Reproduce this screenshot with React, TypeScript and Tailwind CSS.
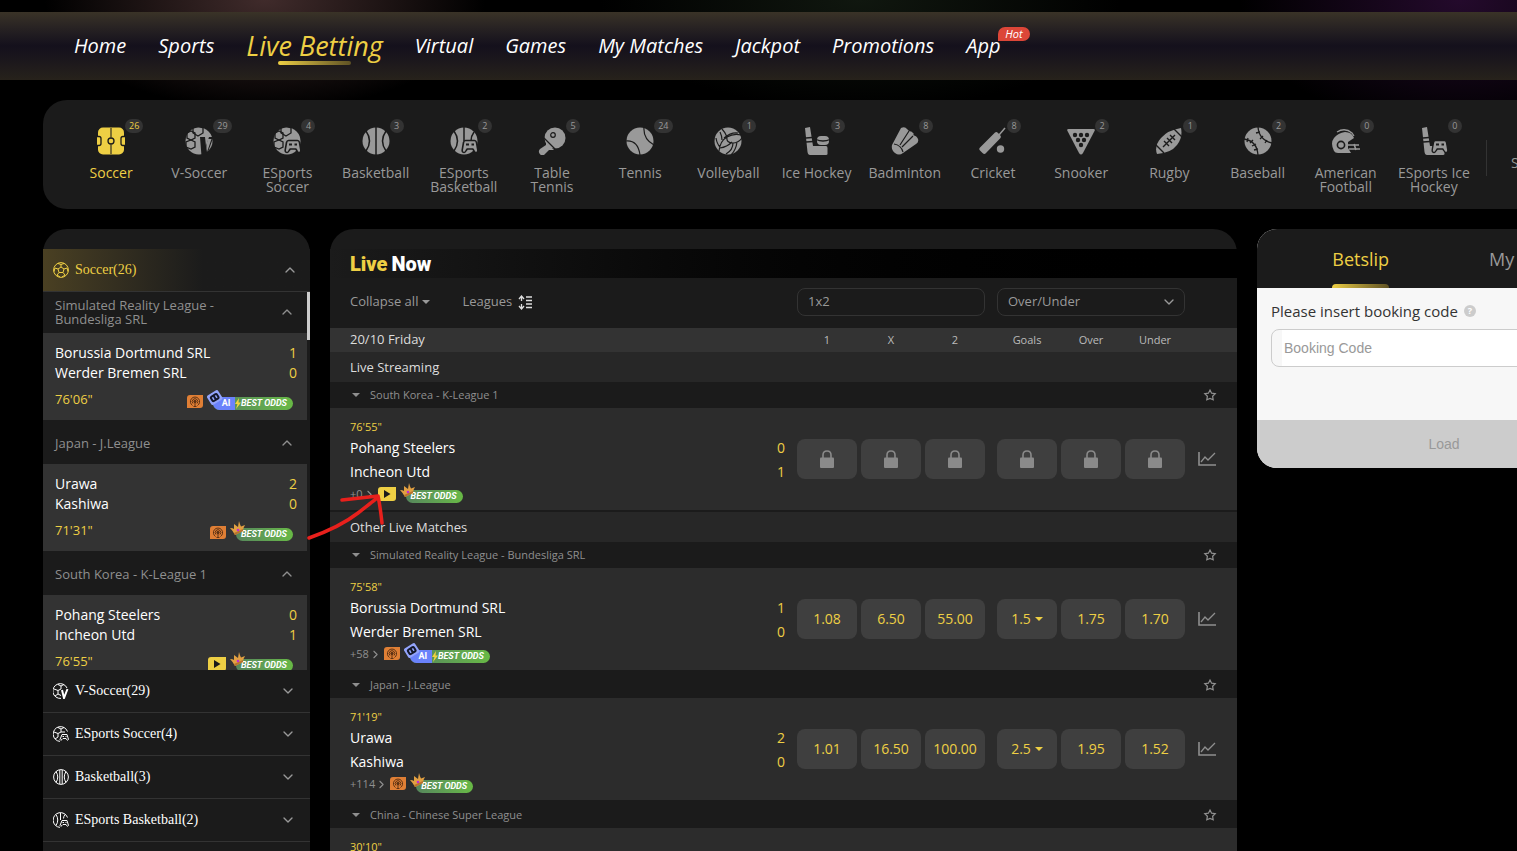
import type { ReactNode } from "react";
import { ChevronDown, ChevronRight, ChevronUp } from "lucide-react";

const BG = "#1b1b1b";

type IconName =
  | "soccer"
  | "vsoccer"
  | "esoccer"
  | "basketball"
  | "ebasketball"
  | "tabletennis"
  | "tennis"
  | "volleyball"
  | "hockey"
  | "badminton"
  | "cricket"
  | "snooker"
  | "rugby"
  | "baseball"
  | "football"
  | "ehockey";

const hexes = (
  <g>
    <path d="M13-1l5 2v5l-5 3-5-3V1z" />
    <path d="M6 4l4 2v5l-4 2-4-2V6z" />
    <path d="M6 13l4 2v5l-4 2-5-2v-5z" />
  </g>
);

const pad = (
  <path d="M15.5 13.500h9q1.500 0 2 2l1.300 7.500q.2 2.500-2 2.500-1 0-2-2l-1-1.500h-5.600l-1 1.500q-1 2-2 2-2.200 0-2-2.500l1.300-7.500q.5-2 2-2z" />
);

const padEyes = (
  <g stroke="none" fill={BG}>
    <rect x="16" y="16.500" width="3" height="2" />
    <rect x="21.500" y="16.500" width="2.500" height="2" />
  </g>
);

const drawings: Record<IconName, ReactNode> = {
  soccer: (
    <>
      <rect x="1" y="0.500" width="26" height="27" rx="5" fill="currentColor" />
      <path d="M14 1v9.500M14 17.500V27" stroke={BG} strokeWidth="1.500" opacity=".7" />
      <circle cx="14" cy="14" r="3" fill="none" stroke={BG} strokeWidth="1.300" />
      <path d="M0 9.500h2q2 0 2 2v5q0 2-2 2H0M28 9.500h-2q-2 0-2 2v5q0 2 2 2h2" fill="currentColor" stroke={BG} strokeWidth="1.300" />
    </>
  ),
  vsoccer: (
    <>
      <circle cx="14" cy="14" r="13.500" fill="currentColor" />
      <g fill="none" stroke={BG} strokeWidth="1.300">{hexes}</g>
      <path d="M15 10h5l1 9 3-9h4.500l-7 19h-5z" fill={BG} />
      <path d="M23 12h3.500l-4.500 13q-1.500-6 1-13z" fill="currentColor" />
    </>
  ),
  esoccer: (
    <>
      <circle cx="14" cy="14" r="13.500" fill="currentColor" />
      <g fill="none" stroke={BG} strokeWidth="1.300">{hexes}</g>
      <g fill="currentColor" stroke={BG} strokeWidth="1.600">{pad}</g>
      {padEyes}
    </>
  ),
  basketball: (
    <>
      <circle cx="14" cy="14" r="13.500" fill="currentColor" />
      <path d="M14 0v28M4 4q7 10 0 20M24 4q-7 10 0 20" fill="none" stroke={BG} strokeWidth="1.500" />
    </>
  ),
  ebasketball: (
    <>
      <circle cx="14" cy="14" r="13.500" fill="currentColor" />
      <path d="M14 0v14M4 4q7 10 0 20M24 5q-3 4-3 9" fill="none" stroke={BG} strokeWidth="1.500" />
      <g fill="currentColor" stroke={BG} strokeWidth="1.600">{pad}</g>
      {padEyes}
    </>
  ),
  tabletennis: (
    <>
      <circle cx="17" cy="11" r="10.500" fill="currentColor" />
      <path d="M8 15l8 8-5 0-5 5q-3 1-4.500-1.500T2 22l6-4z" fill="currentColor" />
      <path d="M5 10l15 15" stroke={BG} strokeWidth="1.300" />
      <circle cx="15" cy="8" r="2.300" fill="none" stroke={BG} strokeWidth="1.200" />
    </>
  ),
  tennis: (
    <>
      <circle cx="14" cy="14" r="13.500" fill="currentColor" />
      <path d="M0 14q12-1 14 14M18 0q-1 12 10 18" fill="none" stroke={BG} strokeWidth="1.200" />
    </>
  ),
  volleyball: (
    <>
      <circle cx="14" cy="14" r="13.500" fill="currentColor" />
      <path
        d="M8 2q3 3 5 8 7-4 14-2M10 11q7-6 14-5M13 10q-7 4-8 14M6 5q2 4 2 8M2 11q1 6 4 9M13 10q-1 6 6 6 5 0 9-5M19 16q0 7-7 11M23 15q-1 8-6 13M6 21q7-1 12-6"
        fill="none"
        stroke={BG}
        strokeWidth="1.200"
      />
    </>
  ),
  hockey: (
    <>
      <path d="M2 1l5-1 3 19h13q1.500 0 1.500 2v6q0 1-1.500 1H7q-2 0-2.500-3z" fill="currentColor" />
      <path d="M3 11l6-.5M3 15l7-.5" stroke={BG} strokeWidth="1.300" />
      <rect x="14" y="9" width="12" height="9" rx="4" fill="currentColor" />
      <path d="M13 12.500q7 3 14 0" stroke={BG} strokeWidth="1.300" fill="none" />
    </>
  ),
  badminton: (
    <>
      <path d="M10 1q4-2 6 1l2 2q3 0 5 3l-1 1q4 1 5 4t-2 5l-13 9q-4 3-8 0t-3-8z" fill="currentColor" />
      <path d="M3 17q7 1 9 8M9 18l9-14M11 20L22 9" fill="none" stroke={BG} strokeWidth="1.200" />
    </>
  ),
  cricket: (
    <>
      <path d="M16 5.500q1.500-1 3 .5l2 2q1.500 1.500.5 3L7 26q-1.500 2-3.500 0L1 23.500q-1.500-1.500 0-3z" fill="currentColor" />
      <path d="M20 8l6-7" stroke="currentColor" strokeWidth="1.500" />
      <circle cx="21.500" cy="22" r="3.700" fill="currentColor" />
    </>
  ),
  snooker: (
    <>
      <path d="M1.500 2h25q2 0 1 2L16 26q-2 3-4 0L.5 4q-1-2 1-2z" fill="currentColor" />
      <g fill={BG}>
        <circle cx="8" cy="8" r="2.200" />
        <circle cx="14" cy="8" r="2.200" />
        <circle cx="20" cy="8" r="2.200" />
        <circle cx="11" cy="13" r="2.200" />
        <circle cx="17" cy="13" r="2.200" />
        <circle cx="14" cy="18" r="2.200" />
      </g>
    </>
  ),
  rugby: (
    <>
      <path d="M26 1q2 9-4 17T2 27Q-1 19 6 11T26 1z" fill="currentColor" />
      <path d="M18 1l9 9M1 18l8 8M8 20L20 8M9 14l5 5M12 11l5 5M15 8l5 5" stroke={BG} strokeWidth="1.400" />
    </>
  ),
  baseball: (
    <>
      <circle cx="14" cy="14" r="13.500" fill="currentColor" />
      <path
        d="M0 12q13 2 14 16M14 0q1 13 14 16M4 11l-1 4M9 13l-3 3M12 17l-4 2M14 22l-4 1M16 5l-4 1M19 9l-3 3M23 13l-2 3"
        fill="none"
        stroke={BG}
        strokeWidth="1.300"
      />
    </>
  ),
  football: (
    <>
      <path d="M2 24q-4-8 0-13t11-6q7 0 9 6l-6 4v6l3 5H6q-3 0-4-2z" fill="currentColor" />
      <path d="M5 5q8-5 15 1l2 3" stroke="currentColor" strokeWidth="1.300" fill="none" />
      <circle cx="9" cy="18" r="3.600" stroke={BG} strokeWidth="1.600" fill="none" />
      <path d="M16 18h11M17 22h11M22 17l2 6" stroke="currentColor" strokeWidth="1.600" />
    </>
  ),
  ehockey: (
    <>
      <path d="M2 1l5-1 3 19h13q1.500 0 1.500 2v6q0 1-1.500 1H7q-2 0-2.500-3z" fill="currentColor" />
      <path d="M3 11l6-.5M3 15l7-.5" stroke={BG} strokeWidth="1.300" />
      <g fill="currentColor" stroke={BG} strokeWidth="1.400">{pad}</g>
      {padEyes}
    </>
  ),
};

const sports: { icon: IconName; label: string; count: number }[] = [
  { icon: "soccer", label: "Soccer", count: 26 },
  { icon: "vsoccer", label: "V-Soccer", count: 29 },
  { icon: "esoccer", label: "ESports Soccer", count: 4 },
  { icon: "basketball", label: "Basketball", count: 3 },
  { icon: "ebasketball", label: "ESports Basketball", count: 2 },
  { icon: "tabletennis", label: "Table Tennis", count: 5 },
  { icon: "tennis", label: "Tennis", count: 24 },
  { icon: "volleyball", label: "Volleyball", count: 1 },
  { icon: "hockey", label: "Ice Hockey", count: 3 },
  { icon: "badminton", label: "Badminton", count: 8 },
  { icon: "cricket", label: "Cricket", count: 8 },
  { icon: "snooker", label: "Snooker", count: 2 },
  { icon: "rugby", label: "Rugby", count: 1 },
  { icon: "baseball", label: "Baseball", count: 2 },
  { icon: "football", label: "American Football", count: 0 },
  { icon: "ehockey", label: "ESports Ice Hockey", count: 0 },
];

type Match = {
  league: string;
  time: string;
  home: string;
  away: string;
  score: [number, number];
  stream?: boolean;
  ai?: boolean;
  more?: number;
  odds?: string[];
};

const sideMatches: Match[] = [
  { league: "Simulated Reality League - Bundesliga SRL", time: "76'06\"", home: "Borussia Dortmund SRL", away: "Werder Bremen SRL", score: [1, 0], ai: true },
  { league: "Japan - J.League", time: "71'31\"", home: "Urawa", away: "Kashiwa", score: [2, 0] },
  { league: "South Korea - K-League 1", time: "76'55\"", home: "Pohang Steelers", away: "Incheon Utd", score: [0, 1], stream: true },
];

const streaming: Match[] = [
  { league: "South Korea - K-League 1", time: "76'55\"", home: "Pohang Steelers", away: "Incheon Utd", score: [0, 1], stream: true, more: 0 },
];

const others: Match[] = [
  {
    league: "Simulated Reality League - Bundesliga SRL",
    time: "75'58\"",
    home: "Borussia Dortmund SRL",
    away: "Werder Bremen SRL",
    score: [1, 0],
    ai: true,
    more: 58,
    odds: ["1.08", "6.50", "55.00", "1.5", "1.75", "1.70"],
  },
  {
    league: "Japan - J.League",
    time: "71'19\"",
    home: "Urawa",
    away: "Kashiwa",
    score: [2, 0],
    more: 114,
    odds: ["1.01", "16.50", "100.00", "2.5", "1.95", "1.52"],
  },
  { league: "China - Chinese Super League", time: "30'10\"", home: "", away: "", score: [0, 0] },
];

function Caret({ className = "" }: { className?: string }) {
  return (
    <svg width="8" height="4" viewBox="0 0 8 4" className={className}>
      <path d="M0 0h8L4 4z" fill="currentColor" />
    </svg>
  );
}

function SideIcon({ name }: { name: string }) {
  return (
    <svg width="16" height="16" viewBox="0 0 16 16" fill="none" stroke="currentColor" strokeWidth="1">
      {name === "soccer" && (
        <>
          <circle cx="8" cy="8" r="7.400" />
          <path d="M8 5l3 2-1 3.500H6L5 7zM8 5V2.500M5 7L2 6M11 7l3-1M6 10.500L4 13M10 10.500L12 13M5 1.500l3 1 3-1M1 9.500L2 6M15 9.500L14 6M4 13l3 2M12 13l-3 2" />
        </>
      )}
      {name === "vsoccer" && (
        <>
          <path d="M14 5A7.400 7.400 0 1 0 8 15.400M5 1.500l3 1.500 3-1.500M8 3v3L5 7.500 1 6M5 7.500V11l-3 2M5 11l3 1.500" />
          <path d="M9 7l2 8 3.500-9" strokeWidth="2" />
        </>
      )}
      {name === "basketball" && (
        <>
          <circle cx="8" cy="8" r="7.400" />
          <path d="M6.800 1v14M9.200 1v14M3 2.500q3.500 5.500 0 11M13 2.500q-3.500 5.500 0 11" />
        </>
      )}
      {(name === "esoccer" || name === "ebasketball") && (
        <>
          <path d="M14.500 5.500A7.400 7.400 0 1 0 7 15.400" />
          {name === "esoccer" ? (
            <path d="M5 1.500l3 1.500 3-1.500M8 3v3L5 7.500 1 6M5 7.500V11l-3 2M8 6l4 0" />
          ) : (
            <path d="M7.500 1v7M3 2.500q3.500 5.500 0 11M12 2.500q-1.500 2-1.500 4" />
          )}
          <path d="M9 8.500h5l1.500 5q-.5 1.500-2 0l-.5-1h-3l-1 1q-1.500 1.500-2 0z" />
          <path d="M9.500 10.500h1.500M12.500 10.500h1" />
        </>
      )}
    </svg>
  );
}

function LiveTag({ stream }: { stream?: boolean }) {
  if (stream) {
    return (
      <svg width="18" height="14" viewBox="0 0 18 14">
        <path d="M3 0h15v11q0 3-3 3H0V3q0-3 3-3z" fill="#eecf44" />
        <path d="M6 3l6.500 4L6 11z" fill="#1b1b1b" />
      </svg>
    );
  }
  return (
    <svg width="16" height="14" viewBox="0 0 16 14">
      <path d="M3 0h13v10q0 3-3 3H0V3q0-3 3-3z" fill="#e07f35" />
      <g fill="none" stroke="#5e3314" strokeWidth="1">
        <circle cx="8" cy="6.500" r="1.200" fill="#5e3314" />
        <path d="M5.500 10.500a4.600 4.600 0 1 1 5 0M6 8.500a2.800 2.800 0 1 1 4 0M8 7v4.500M6.500 11.500h3" />
      </g>
    </svg>
  );
}

function BestOdds({ ai }: { ai?: boolean }) {
  return (
    <span className="relative mt-1 inline-flex h-[13px] items-center rounded-full bg-gradient-to-r from-[#56865b] to-[#68b945] pr-1.5 font-['Roboto',sans-serif] text-[9px] leading-[13px] font-bold text-white italic">
      {ai ? (
        <>
          <span className="flex h-[13px] w-[22px] items-center justify-center rounded-l-full bg-[#6a82fb] pl-1 not-italic">AI</span>
          <svg width="6" height="11" viewBox="0 0 6 11">
            <path d="M4 0L0 6h2.500L1 11l5-6.500H3.500z" fill="#f4d33e" />
          </svg>
          <svg width="16" height="15" viewBox="0 0 16 15" className="absolute -top-[7px] -left-1.5">
            <g transform="rotate(-32 8 8)">
              <rect x="1.500" y="2" width="13" height="11" rx="2" fill="#93a4fb" />
              <rect x="3.500" y="4" width="9" height="7" rx="2" fill="#14182b" />
              <rect x="5.500" y="6" width="1.500" height="3" fill="#93a4fb" />
              <rect x="9" y="6" width="1.500" height="3" fill="#93a4fb" />
            </g>
          </svg>
        </>
      ) : (
        <svg width="15" height="14" viewBox="0 0 15 14" className="absolute -top-[7px] -left-1.5">
          <path d="M0 7q3 0 4 1L4 3l4 3L9 0q1 4 2 5.500L15 4q-2 3-2 6l-8 4q-2-4-5-7z" fill="#e2a042" />
          <path d="M4 12l9-4v2l-8 4z" fill="#b8722d" />
          <circle cx="8" cy="9" r="1.300" fill="#c02bd1" />
        </svg>
      )}
      <span className={ai ? "" : "pl-[5px]"}>BEST ODDS</span>
    </span>
  );
}

function Lock() {
  return (
    <svg width="16" height="20" viewBox="0 0 16 20">
      <path d="M4 9V6q0-4 4-4t4 4v3" fill="none" stroke="#8a8a8a" strokeWidth="1.600" />
      <rect x="1" y="8.500" width="14" height="10.500" rx="1" fill="#8a8a8a" />
    </svg>
  );
}

function MatchRow({ match }: { match: Match }) {
  const cell = "flex h-10 w-[60px] items-center justify-center rounded-lg bg-[#3f3f3f] text-sm text-[#eecf44]";
  const values = match.odds ?? ["", "", "", "", "", ""];
  return (
    <>
      <div className="flex h-[26px] items-center justify-between pr-5 pl-[22px] text-[11px] text-[#8f8f8f]">
        <button className="flex items-center gap-2.5">
          <Caret />
          {match.league}
        </button>
        <button aria-label="Add league to favourites">
          <svg width="14" height="14" viewBox="0 0 14 14" fill="none" stroke="currentColor" strokeWidth="1.200">
            <path d="M7 2l1.600 3.200 3.600.5-2.600 2.500.6 3.600L7 10.500l-3.200 1.300.6-3.600L1.800 5.700l3.600-.5z" />
          </svg>
        </button>
      </div>
      <div className="flex h-[104px] items-center border-b-2 border-[#1b1b1b] bg-[#2c2c2c] pl-5">
        <div className="min-w-0 flex-1 self-start pt-2.5">
          <div className="text-[11px] leading-[18px] text-[#eecf44]">{match.time}</div>
          {match.home && (
            <>
              <div className="flex justify-between text-sm leading-6 text-white">
                {match.home}
                <span className="text-[#eecf44]">{match.score[0]}</span>
              </div>
              <div className="flex justify-between text-sm leading-6 text-white">
                {match.away}
                <span className="text-[#eecf44]">{match.score[1]}</span>
              </div>
              <div className="flex h-5 items-center text-[11px] text-[#8f8f8f]">
                +{match.more}
                <ChevronRight size={13} />
                <span className="ml-0.5 flex items-center gap-2.5">
                  <LiveTag stream={match.stream} />
                  <BestOdds ai={match.ai} />
                </span>
              </div>
            </>
          )}
        </div>
        <div className="ml-3 flex gap-3">
          {[0, 3].map((start) => (
            <div key={start} className="flex gap-1">
              {values.slice(start, start + 3).map((v, i) => (
                <button key={i} className={cell} aria-label={v || "Locked"}>
                  {v || <Lock />}
                  {v && start === 3 && i === 0 && <Caret className="ml-1" />}
                </button>
              ))}
            </div>
          ))}
        </div>
        <button className="flex w-[52px] pl-3" aria-label="Statistics">
          <svg width="20" height="16" viewBox="0 0 20 16" fill="none" stroke="#8f8f8f">
            <path d="M2 1v13h17" strokeWidth="1.600" />
            <path d="M4 11l4-5 3 3 7-7" strokeWidth="1.300" />
          </svg>
        </button>
      </div>
    </>
  );
}

function Navigation() {
  const links = ["Home", "Sports", "Live Betting", "Virtual", "Games", "My Matches", "Jackpot", "Promotions", "App"];
  return (
    <nav className="flex h-[68px] items-center gap-8 bg-gradient-to-b from-[#3a3327] via-[#14101c] to-[#27221b] pl-[74px] text-xl font-medium text-white italic">
      {links.map((link) =>
        link === "Live Betting" ? (
          <a key={link} href="#" className="relative text-[27px] leading-[38px] whitespace-nowrap text-[#eecf44]">
            {link}
            <span className="absolute inset-x-8 bottom-0 h-1 rounded-full bg-gradient-to-r from-[#eecf44] to-[#5f5224]" />
          </a>
        ) : (
          <a key={link} href="#" className="relative whitespace-nowrap">
            {link}
            {link === "App" && (
              <span className="absolute -top-[5px] left-8 h-3.5 rounded-t-lg rounded-br-lg bg-[#dc4638] px-[7px] text-[11px] leading-3.5">
                Hot
              </span>
            )}
          </a>
        ),
      )}
    </nav>
  );
}

function SportsBar() {
  return (
    <section className="mt-5 flex h-[109px] rounded-3xl bg-[#1b1b1b] pl-6">
      <div className="flex w-[1411px]">
        {sports.map((s, i) => (
          <a
            key={s.label}
            href="#"
            className={`flex flex-1 basis-0 flex-col items-center pt-[27px] text-center text-sm leading-3.5 ${i === 0 ? "text-[#eecf44]" : "text-[#999]"}`}
          >
            <span className="relative">
              <svg width="28" height="28" viewBox="0 0 28 28">
                {drawings[s.icon]}
              </svg>
              <span className="absolute -top-2 left-7 h-3.5 min-w-3.5 rounded-full bg-[#333] px-1 text-[9px] leading-3.5">
                {s.count}
              </span>
            </span>
            <span className="mt-[11px] max-w-20">{s.label}</span>
          </a>
        ))}
      </div>
      <span className="mt-10 ml-2 h-9 w-px bg-[#333]" />
      <a href="#" className="mt-14 ml-6 text-sm leading-3.5 text-[#999]">
        Schedule
      </a>
    </section>
  );
}

function Sidebar() {
  return (
    <aside className="w-[267px] shrink-0 self-start rounded-t-3xl bg-[#1b1b1b] pt-5">
      <button className="flex h-[43px] w-full items-center gap-1.5 border-b border-[#333] bg-gradient-to-r from-[#4a4022] to-[#1b1b1b] to-60% pr-3 pl-2.5 font-['Liberation_Serif',serif] text-sm text-[#eecf44]">
        <SideIcon name="soccer" />
        Soccer(26)
        <ChevronUp size={16} className="ml-auto text-[#999]" />
      </button>
      <div className="flex h-[378px] overflow-hidden">
        <div className="-mt-[3px] flex-1">
          {sideMatches.map((m) => (
            <div key={m.league}>
              <button className="flex h-11 w-full items-center justify-between pt-0.5 pr-3 pl-3 text-left text-[13px] leading-3.5 text-[#8f8f8f]">
                <span className="max-w-44">{m.league}</span>
                <ChevronUp size={16} />
              </button>
              <div className="h-[87px] bg-[#333] pt-2.5 pr-2.5 pl-3 text-sm leading-5 text-white">
                <div className="flex justify-between">
                  {m.home}
                  <span className="text-[#eecf44]">{m.score[0]}</span>
                </div>
                <div className="flex justify-between">
                  {m.away}
                  <span className="text-[#eecf44]">{m.score[1]}</span>
                </div>
                <div className="mt-1 flex items-center pr-1 text-[13px] text-[#eecf44]">
                  {m.time}
                  <span className="mt-1.5 ml-auto flex items-center gap-2.5">
                    <LiveTag stream={m.stream} />
                    <BestOdds ai={m.ai} />
                  </span>
                </div>
              </div>
            </div>
          ))}
        </div>
        <div className="w-[3px]">
          <div className="h-12 bg-[#ccc]" />
        </div>
      </div>
      {[
        ["vsoccer", "V-Soccer(29)"],
        ["esoccer", "ESports Soccer(4)"],
        ["basketball", "Basketball(3)"],
        ["ebasketball", "ESports Basketball(2)"],
        ["basketball", "Tennis(24)"],
      ].map(([icon, label]) => (
        <button
          key={label}
          className="flex h-[43px] w-full items-center gap-1.5 border-b border-[#333] pr-3.5 pl-2.5 font-['Liberation_Serif',serif] text-sm text-white"
        >
          <SideIcon name={icon} />
          {label}
          <ChevronDown size={16} className="ml-auto text-[#999]" />
        </button>
      ))}
    </aside>
  );
}

function LiveNow() {
  const select = "h-7 w-[188px] appearance-none rounded-lg border border-[#333] bg-[#1b1b1b] px-2.5 text-[13px] text-[#999]";
  const section = "flex h-[30px] items-center bg-[#272727] px-5 pt-0.5 text-[13px] text-[#ddd]";
  return (
    <main className="min-w-0 flex-1 rounded-t-3xl bg-[#1b1b1b] pt-5">
      <h1 className="flex h-[29px] items-center gap-1 bg-gradient-to-r from-[#1b1b1b] to-black px-5 font-['Impact','Roboto',sans-serif] text-xl font-black text-white">
        <span className="text-[#eecf44]">Live</span> Now
      </h1>
      <div className="flex h-[50px] items-start pt-2.5 pr-[52px] pl-5 text-[13px] text-[#999]">
        <button className="flex h-7 items-center gap-1">
          Collapse all
          <Caret />
        </button>
        <button className="ml-8 flex h-7 items-center gap-1.5">
          Leagues
          <svg width="15" height="15" viewBox="0 0 15 15" fill="none" stroke="#ddd" strokeWidth="1.300">
            <path d="M3.500 1v5M1 4l2.500-3L6 4M3.500 14V9M1 11l2.500 3L6 11M8 2h6M8 5.500h6M8 9h6M8 12.500h6" />
          </svg>
        </button>
        <div className="ml-auto flex gap-3">
          <select className={select} aria-label="Result market">
            <option>1x2</option>
          </select>
          <span className="relative">
            <select className={select} aria-label="Totals market">
              <option>Over/Under</option>
            </select>
            <ChevronDown size={16} className="pointer-events-none absolute top-1.5 right-2" />
          </span>
        </div>
      </div>
      <div className="flex h-6 items-center bg-[#333] pr-[52px] pl-5 text-[13px] text-[#ddd]">
        20/10 Friday
        <div className="ml-auto flex gap-3 text-center text-[11px] text-[#bbb]">
          {[["1", "X", "2"], ["Goals", "Over", "Under"]].map((group) => (
            <div key={group[0]} className="flex gap-1">
              {group.map((g) => (
                <span key={g} className="w-[60px]">{g}</span>
              ))}
            </div>
          ))}
        </div>
      </div>
      <h2 className={section}>Live Streaming</h2>
      {streaming.map((m) => (
        <MatchRow key={m.league} match={m} />
      ))}
      <h2 className={section}>Other Live Matches</h2>
      {others.map((m) => (
        <MatchRow key={m.league} match={m} />
      ))}
    </main>
  );
}

function Betslip() {
  return (
    <aside className="w-[374px] shrink-0 self-start overflow-hidden rounded-[20px] bg-[#f7f7f7]">
      <div className="flex h-[59px] justify-center gap-[100px] bg-[#1b1b1b] text-lg text-[#999]">
        <button className="relative text-[#eecf44]">
          Betslip
          <span className="absolute inset-x-0 bottom-0 h-1 rounded-t bg-gradient-to-r from-[#eecf44] to-[#5f5224]" />
        </button>
        <button>My Bets</button>
      </div>
      <div className="h-[132px] px-3.5 pt-3">
        <div className="flex items-center gap-1.5 text-[15px] leading-[22px] text-[#333]">
          <label htmlFor="code">Please insert booking code</label>
          <span className="flex h-3 w-3 items-center justify-center rounded-full bg-[#ccc] text-[9px] font-bold text-white">?</span>
        </div>
        <div className="mt-[7px] h-[38px] overflow-hidden rounded-lg border border-[#ccc] pl-2.5">
          <input
            id="code"
            placeholder="Booking Code"
            className="h-full w-full bg-white px-0.5 font-['Liberation_Sans',sans-serif] text-sm outline-none placeholder:text-[#999]"
          />
        </div>
      </div>
      <button className="h-12 w-full bg-[#ccc] font-['Liberation_Sans',sans-serif] text-sm text-[#999]">Load</button>
    </aside>
  );
}

export default function App() {
  return (
    <div className="relative h-screen overflow-hidden bg-black font-['Segoe_UI','Open_Sans',sans-serif]">
      <div className="min-w-[1674px] bg-[radial-gradient(220px_110px_at_265px_0px,#402b2b,transparent),radial-gradient(260px_110px_at_860px_0px,#10170f,transparent),radial-gradient(220px_130px_at_1460px_0px,#240a2c,transparent)] bg-no-repeat pt-3">
        <Navigation />
        <div className="px-[43px]">
          <SportsBar />
          <div className="mt-5 flex gap-5">
            <Sidebar />
            <LiveNow />
            <Betslip />
          </div>
        </div>
      </div>
      {/* Hand-drawn arrow pointing at the stream button */}
      <svg
        width="90"
        height="60"
        viewBox="0 0 90 60"
        fill="none"
        stroke="#e8201c"
        strokeWidth="3.500"
        strokeLinecap="round"
        strokeLinejoin="round"
        className="pointer-events-none absolute top-[485px] left-[300px]"
      >
        <path d="M9 53Q40 42 58 28T77 13M42 15L78 11Q80 20 82 38" />
      </svg>
    </div>
  );
}
